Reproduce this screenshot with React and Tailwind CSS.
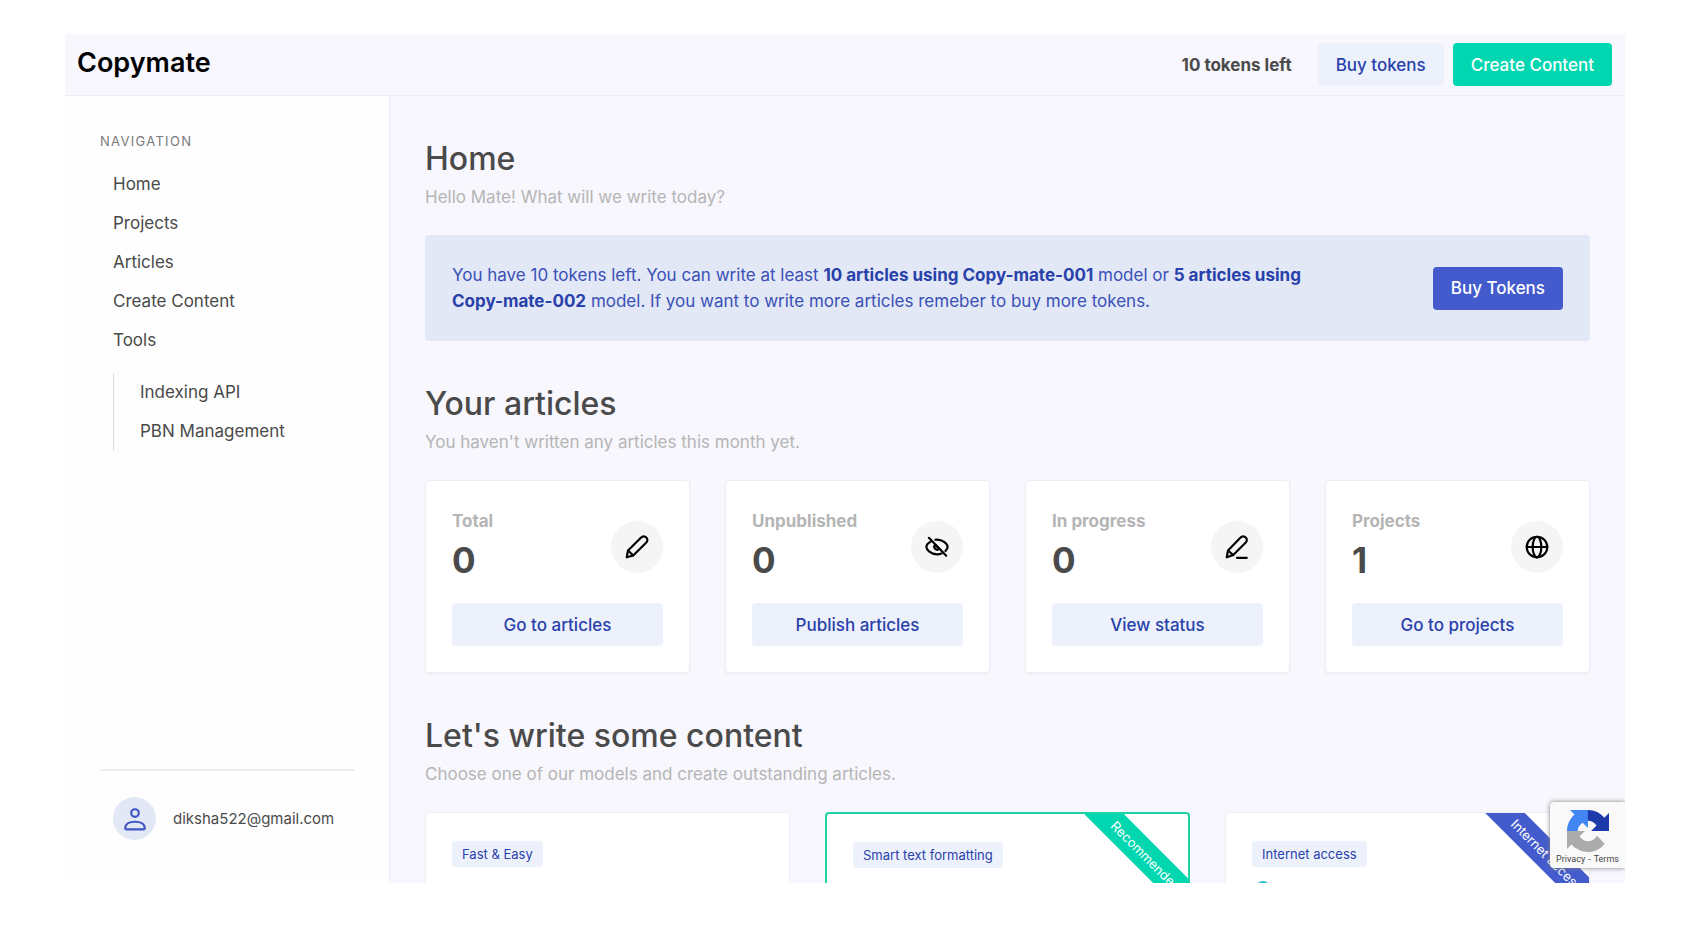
import clsx from "clsx";

const navItems = ["Home", "Projects", "Articles", "Create Content", "Tools"];
const toolItems = ["Indexing API", "PBN Management"];

export default function App() {
  return (
    <div className="h-screen bg-white pl-[65px] pr-[77px] pt-[34px] pb-[53px] font-['Inter',sans-serif] text-[17px] leading-[26px] text-[#4a4a4a]">
      <div className="relative flex h-full flex-col overflow-hidden bg-[#f7f7fd]">
        <Header />
        <div className="flex min-h-0 flex-1">
          <Sidebar />
          <main className="min-w-0 flex-1 overflow-hidden px-[35px] pt-[42px]">
            <Heading title="Home" subtitle="Hello Mate! What will we write today?" />
            <TokensAlert />
            <Heading title="Your articles" subtitle="You haven't written any articles this month yet." />
            <div className="mb-[42px] grid grid-cols-4 gap-[35px]">
              <StatCard label="Total" value="0" action="Go to articles" icon={<PencilIcon />} />
              <StatCard label="Unpublished" value="0" action="Publish articles" icon={<EyeOffIcon />} />
              <StatCard label="In progress" value="0" action="View status" icon={<EditIcon />} />
              <StatCard label="Projects" value="1" action="Go to projects" icon={<GlobeIcon />} />
            </div>
            <Heading title="Let's write some content" subtitle="Choose one of our models and create outstanding articles." />
            <div className="grid grid-cols-3 gap-[35px]">
              <ModelCard tag="Fast & Easy" />
              <ModelCard tag="Smart text formatting" ribbon="Recommended" highlighted />
              <ModelCard tag="Internet access" ribbon="Internet access" online />
            </div>
          </main>
        </div>
        <Recaptcha />
      </div>
    </div>
  );
}

const Header = () => {
  return (
    <header className="flex h-[62px] shrink-0 items-center justify-between border-b border-[#ededf3] pl-3 pr-[13px]">
      <a href="#" className="pb-1 text-[27px] leading-8 font-semibold text-black">Copymate</a>
      <div className="flex items-center">
        <span className="mr-[26px] font-bold">10 tokens left</span>
        <Button className="mr-[9px] bg-[#edf1fb] text-[#2941ab]">Buy tokens</Button>
        <Button className="bg-[#00d7b0] text-white">Create Content</Button>
      </div>
    </header>
  );
};

const Sidebar = () => {
  return (
    <aside className="flex w-[325px] shrink-0 flex-col justify-between border-r border-[#ededf3] bg-[#fefefe] pl-[35px] pr-[35px] pt-[35px] pb-[43px]">
      <nav>
        <p className="mb-[14px] text-[13px] leading-5 tracking-widest text-[#7a7a7a] uppercase">Navigation</p>
        <ul>
          {navItems.map((item) => (
            <li key={item}>
              <a href="#" className="block px-[13px] py-[6px] leading-[27px]">{item}</a>
            </li>
          ))}
        </ul>
        <ul className="mt-[13px] ml-[13px] border-l border-[#dbdbdb] pl-[13px]">
          {toolItems.map((item) => (
            <li key={item}>
              <a href="#" className="block px-[13px] py-[6px] leading-[27px]">{item}</a>
            </li>
          ))}
        </ul>
      </nav>
      <div className="border-t-2 border-[#ededf0] pt-[26px]">
        <a href="#" className="flex items-center pl-[13px] text-[15px]">
          <span className="mr-[17px] flex size-[43px] items-center justify-center rounded-full bg-[#e2e8f5] text-[#3f55c6]">
            <UserIcon />
          </span>
          diksha522@gmail.com
        </a>
      </div>
    </aside>
  );
};

const Heading = ({ title, subtitle }) => {
  return (
    <div className="mb-[25px]">
      <h2 className="text-[32px] leading-[42px] font-medium">{title}</h2>
      <p className="mt-1 text-[#b5b5b5]">{subtitle}</p>
    </div>
  );
};

const TokensAlert = () => {
  return (
    <div className="mb-[42px] flex items-center justify-between rounded bg-[#e2e8f5] px-[27px] py-[27px] text-[#3a50b8]">
      <p className="max-w-[860px]">
        You have 10 tokens left. You can write at least <strong className="font-bold text-[#2941ab]">10 articles using Copy-mate-001</strong> model
        or <strong className="font-bold text-[#2941ab]">5 articles using Copy-mate-002</strong> model. If you want to write more articles remeber
        to buy more tokens.
      </p>
      <Button className="bg-[#435bcd] text-white">Buy Tokens</Button>
    </div>
  );
};

const StatCard = ({ label, value, action, icon }) => {
  return (
    <div className="rounded border border-[#ededf3] bg-white px-[26px] pt-[27px] pb-[26px] shadow-xs">
      <div className="mb-[17px] flex items-center justify-between">
        <div>
          <p className="font-bold text-[#b5b5b5]">{label}</p>
          <p className="text-[35px] leading-[52px] font-bold">{value}</p>
        </div>
        <span className="flex size-[52px] items-center justify-center rounded-full bg-[#f5f5f5] text-black">{icon}</span>
      </div>
      <Button className="w-full bg-[#edf1fb] text-[#2941ab]">{action}</Button>
    </div>
  );
};

const ModelCard = ({ tag, ribbon, highlighted, online }) => {
  return (
    <div
      className={clsx(
        "relative h-[400px] overflow-hidden rounded bg-white px-[26px] pt-[27px]",
        highlighted ? "border-2 border-[#1fd3a6]" : "border border-[#ededf3]"
      )}
    >
      <span className="inline-block rounded bg-[#edf1fb] px-[10px] text-[13px] leading-[26px] text-[#2941ab]">{tag}</span>
      {online && <span className="mt-[14px] ml-[3px] block size-4 rounded-full border-2 border-[#2fbfd8]" />}
      {ribbon && (
        <div
          className={clsx(
            "absolute top-[28px] -right-[58px] w-[200px] rotate-45 text-center text-[13px] leading-[28px] text-white",
            highlighted ? "bg-[#00d7b0]" : "bg-[#435bcd]"
          )}
        >
          {ribbon}
        </div>
      )}
    </div>
  );
};

const Button = ({ className, children }) => {
  return (
    <button type="button" className={clsx("h-[43px] rounded px-[18px] font-medium whitespace-nowrap", className)}>
      {children}
    </button>
  );
};

const Recaptcha = () => {
  return (
    <div className="absolute right-0 bottom-[15px] flex h-[66px] w-[75px] flex-col items-center rounded-l bg-[#f9f9f9] pt-[8px] shadow-[0_0_5px_gray]">
      <svg width="42" height="42" viewBox="0 0 64 64">
        <path fill="#1c3aa9" d="M64 31.955l-.033-1.370V4.687l-7.160 7.160C50.948 4.674 42.033.093 32.050.093c-10.400 0-19.622 4.960-25.458 12.640l11.736 11.860a15.550 15.550 0 0 1 4.754-5.334c2.050-1.600 4.952-2.906 8.968-2.906.485 0 .860.057 1.135.163 4.976.393 9.288 3.140 11.828 7.124l-8.307 8.307L64 31.953" />
        <path fill="#4285f4" d="M31.862.094l-1.370.033H4.594l7.160 7.160C4.580 13.147 0 22.060 0 32.046c0 10.400 4.960 19.622 12.640 25.458L24.500 45.768a15.550 15.550 0 0 1-5.334-4.754c-1.600-2.050-2.906-4.952-2.906-8.968 0-.485.057-.860.163-1.135.393-4.976 3.140-9.288 7.124-11.828l8.307 8.307L31.860.095" />
        <path fill="#ababab" d="M.001 32.045l.033 1.370v25.898l7.160-7.160c5.860 7.173 14.774 11.754 24.760 11.754 10.400 0 19.622-4.960 25.458-12.640l-11.736-11.860a15.550 15.550 0 0 1-4.754 5.334c-2.050 1.600-4.952 2.906-8.968 2.906-.485 0-.860-.057-1.135-.163-4.976-.393-9.288-3.140-11.828-7.124l8.307-8.307c-10.522.040-22.400.066-27.295-.005" />
      </svg>
      <div className="flex gap-[3px] font-['Roboto',sans-serif] text-[9px] leading-[14px] text-[#444]">
        <a href="#">Privacy</a>
        <span>-</span>
        <a href="#">Terms</a>
      </div>
    </div>
  );
};

const Icon = ({ children }) => {
  return (
    <svg width="26" height="26" viewBox="0 0 24 24" fill="none" stroke="currentColor" strokeWidth="2" strokeLinecap="round" strokeLinejoin="round">
      {children}
    </svg>
  );
};

const PencilIcon = () => (
  <Icon>
    <path d="M2.500 21.500l1.200-6.200L15.800 3.200a3.200 3.200 0 0 1 4.800 0 3.200 3.200 0 0 1 0 4.600L8.500 19.800z" />
    <path d="M4 15.500l4.500 4.300" />
  </Icon>
);

const EditIcon = () => (
  <Icon>
    <path d="M2.500 21.500l1.200-6.200L15.300 3.200a3.200 3.200 0 0 1 4.800 0 3.200 3.200 0 0 1 0 4.600L8.500 19.300z" />
    <path d="M4 15.500l4.500 4M12 22h9" />
  </Icon>
);

const EyeOffIcon = () => (
  <Icon>
    <path d="M4.500 3.500l16 16.500" />
    <path d="M6.500 6.800C4 8.200 2.200 10.500 2.200 12c0 2.500 4 6.800 9.800 6.800 1.500 0 3-.3 4.200-.8M10.500 5.300C17 4.500 21.800 9.300 21.800 12c0 1-.8 2.500-2 3.700" />
    <path d="M10.300 10a2.600 2.600 0 0 0 3.700 3.700z" />
  </Icon>
);

const GlobeIcon = () => (
  <Icon>
    <circle cx="12" cy="12" r="9.500" />
    <ellipse cx="12" cy="12" rx="4" ry="9.500" />
    <path d="M2.500 12h19" />
  </Icon>
);

const UserIcon = () => (
  <Icon>
    <circle cx="12" cy="6.500" r="3.500" />
    <path d="M3 20.500c0-3.600 3.500-6 9-6s9 2.400 9 6c0 .7-.4 1-1.100 1H4.100c-.7 0-1.100-.3-1.100-1z" />
  </Icon>
);
